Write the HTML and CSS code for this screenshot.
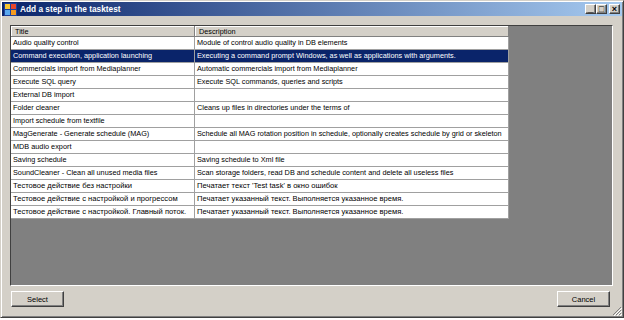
FILE: index.html
```html
<!doctype html>
<html>
<head>
  <link rel="stylesheet" href="styles.css">
</head>
<body>
  <div class="window">
    <div class="titlebar">
      <svg class="appIcon" width="13" height="13" viewBox="0 0 13 13">
        <rect x="0" y="0" width="13" height="13" fill="#1d3f9a"/>
        <rect x="1" y="1" width="5" height="5" fill="#f7c531"/>
        <rect x="7" y="1" width="5" height="5" fill="#e8462a"/>
        <rect x="1" y="7" width="5" height="5" fill="#5aa9f0"/>
        <rect x="7" y="7" width="5" height="5" fill="#f59a1f"/>
      </svg>
      <span class="caption">Add a step in the tasktest</span>
      <div class="controls">
        <button class="ctl min">_</button>
        <button class="ctl max">&#9633;</button>
        <button class="ctl close">&#215;</button>
      </div>
    </div>

    <div class="content">
      <div class="grid">
        <table class="steps">
          <tr class="head">
            <th class="colTitle">Title</th>
            <th class="colDesc">Description</th>
          </tr>
          <tr><td>Audio quality control</td><td>Module of control audio quality in DB elements</td></tr>
          <tr class="selected"><td>Command execution, application launching</td><td>Executing a command prompt Windows, as well as applications with arguments.</td></tr>
          <tr><td>Commercials import from Mediaplanner</td><td>Automatic commercials import from Mediaplanner</td></tr>
          <tr><td>Execute SQL query</td><td>Execute SQL commands, queries and scripts</td></tr>
          <tr><td>External DB import</td><td></td></tr>
          <tr><td>Folder cleaner</td><td>Cleans up files in directories under the terms of</td></tr>
          <tr><td>Import schedule from textfile</td><td></td></tr>
          <tr><td>MagGenerate - Generate schedule (MAG)</td><td>Schedule all MAG rotation position in schedule, optionally creates schedule by grid or skeleton</td></tr>
          <tr><td>MDB audio export</td><td></td></tr>
          <tr><td>Saving schedule</td><td>Saving schedule to Xml file</td></tr>
          <tr><td>SoundCleaner - Clean all unused media files</td><td>Scan storage folders, read DB and schedule content and delete all useless files</td></tr>
          <tr class="ru"><td>Тестовое действие без настройки</td><td>Печатает текст 'Test task' в окно ошибок</td></tr>
          <tr class="ru"><td>Тестовое действие с настройкой и прогрессом</td><td>Печатает указанный текст. Выполняется указанное время.</td></tr>
          <tr class="ru"><td>Тестовое действие с настройкой. Главный поток.</td><td>Печатает указанный текст. Выполняется указанное время.</td></tr>
        </table>
      </div>

      <div class="buttons">
        <button class="btn">Select</button>
        <button class="btn">Cancel</button>
      </div>
    </div>

    <svg class="grip" width="10" height="10" viewBox="0 0 10 10">
      <path d="M9 1 L1 9 M9 4 L4 9 M9 7 L7 9" stroke="#808080" stroke-width="1"/>
      <path d="M10 2 L2 10 M10 5 L5 10 M10 8 L8 10" stroke="#ffffff" stroke-width="1"/>
    </svg>
  </div>
</body>
</html>
```

FILE: styles.css
```css
html, body {
  margin: 0;
  padding: 0;
}
body {
  width: 624px;
  height: 320px;
  background: #ffffff;
  font-family: "Liberation Sans", Arial, sans-serif;
  overflow: hidden;
}

.window {
  position: relative;
  width: 624px;
  height: 318px;
  box-sizing: border-box;
  background: #d4d0c8;
  border: 1px solid;
  border-color: #d4d0c8 #404040 #404040 #d4d0c8;
  box-shadow: inset 1px 1px 0 #ffffff, inset -1px -1px 0 #808080;
  padding: 1px;
  display: flex;
  flex-direction: column;
}

/* caption bar */
.titlebar {
  height: 14px;
  flex: none;
  display: flex;
  align-items: center;
  padding: 0 2px 0 2px;
  background: linear-gradient(to right, #0a246a, #a6caf0);
}
.appIcon {
  flex: none;
  margin-right: 3px;
}
.caption {
  color: #ffffff;
  font-weight: bold;
  font-size: 8.3px;
  white-space: nowrap;
}
.controls {
  margin-left: auto;
  display: flex;
  gap: 0;
}
.ctl {
  width: 11px;
  height: 10px;
  padding: 0;
  margin: 0;
  border: 1px solid;
  border-color: #ffffff #404040 #404040 #ffffff;
  box-shadow: inset -1px -1px 0 #808080;
  background: #d4d0c8;
  color: #000000;
  font-family: "Liberation Sans", Arial, sans-serif;
  font-weight: bold;
  font-size: 9px;
  line-height: 7px;
  text-align: center;
  overflow: hidden;
}
.ctl.min {
  line-height: 3px;
}
.ctl.close {
  margin-left: 2px;
}

/* body of dialog */
.content {
  flex: 1;
  display: flex;
  flex-direction: column;
  padding: 9px 9px 9px 8px;
}

.grid {
  flex: 1;
  background: #808080;
  border: 1px solid;
  border-color: #404040 #ffffff #ffffff #404040;
  overflow: hidden;
}

.steps {
  border-collapse: collapse;
  background: #ffffff;
  font-size: 7.3px;
  color: #000000;
  table-layout: fixed;
  width: 498px;
}
.steps th {
  height: 10px;
  padding: 0 0 0 4px;
  text-align: left;
  font-weight: normal;
  background: #d4d0c8;
  border-right: 1px solid #808080;
  border-bottom: 1px solid #808080;
  box-shadow: inset 1px 1px 0 #ffffff;
  white-space: nowrap;
  line-height: 9px;
}
.steps .colTitle {
  width: 179px;
}
.steps td {
  height: 12px;
  padding: 0 0 0 2px;
  border: 1px solid #a0a0a0;
  border-top: none;
  white-space: nowrap;
  overflow: hidden;
  line-height: 12px;
}
.steps td:first-child {
  border-left: none;
}
.steps .ru td {
  font-size: 7.6px;
}
.steps .selected td {
  background: #0a246a;
  color: #ffffff;
}

.buttons {
  margin-top: 5px;
  height: 16px;
  flex: none;
  display: flex;
  justify-content: space-between;
  padding-left: 1px;
  padding-right: 3px;
}
.btn {
  width: 53px;
  height: 16px;
  padding: 0;
  background: #d4d0c8;
  border: 1px solid;
  border-color: #ffffff #404040 #404040 #ffffff;
  box-shadow: inset -1px -1px 0 #808080;
  font-family: "Liberation Sans", Arial, sans-serif;
  font-size: 7.5px;
  color: #000000;
}

.grip {
  position: absolute;
  right: 1px;
  bottom: 1px;
}
```
